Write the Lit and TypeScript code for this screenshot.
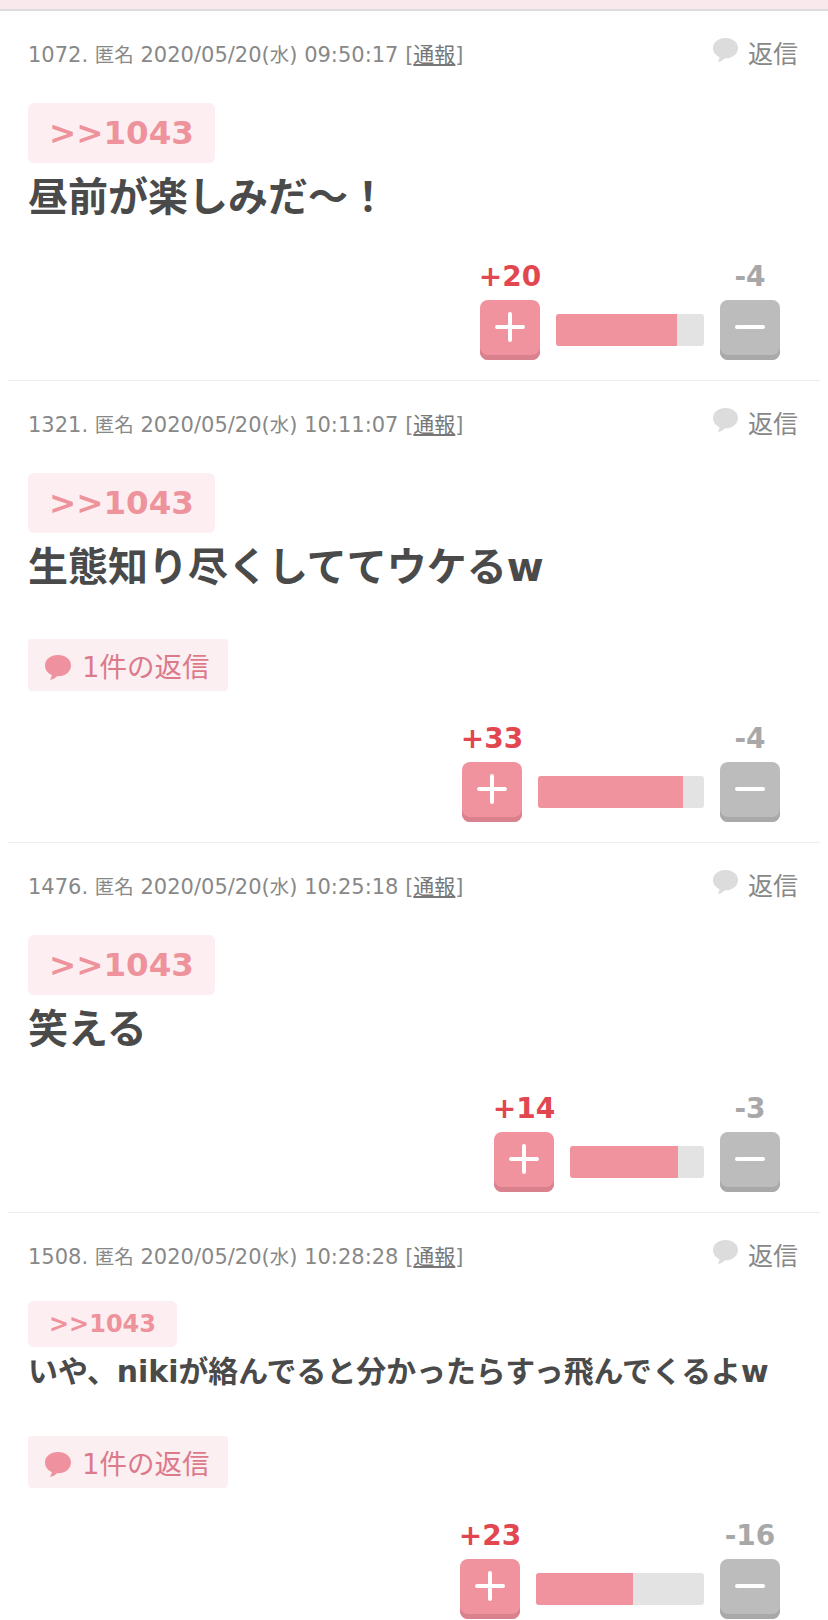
import { LitElement, html, css } from "lit";
import { customElement } from "lit/decorators.js";

const bubble = html`<svg viewBox="0 0 28 26" aria-hidden="true"><path d="M14 0C6.500 0 1 4.500 1 10.500c0 4.300 2.800 7.800 6.800 9.500-.2 1.800-.9 3.600-2 5 2.900-.4 5.200-1.600 7-3.800.4 0 .8.100 1.200.100 7.500 0 13-4.800 13-10.800S21.500 0 14 0z"/></svg>`;

interface Post {
  id: number; time: string; text: string; small?: boolean; replies?: number;
  plus: number; minus: number; bar: number;
}

const posts: Post[] = [
  { id: 1072, time: "09:50:17", text: "昼前が楽しみだ〜！", plus: 20, minus: 4, bar: 148 },
  { id: 1321, time: "10:11:07", text: "生態知り尽くしててウケるw", replies: 1, plus: 33, minus: 4, bar: 166 },
  { id: 1476, time: "10:25:18", text: "笑える", plus: 14, minus: 3, bar: 134 },
  { id: 1508, time: "10:28:28", text: "いや、nikiが絡んでると分かったらすっ飛んでくるよw", small: true, replies: 1, plus: 23, minus: 16, bar: 168 },
];

@customElement("app-root")
export class AppRoot extends LitElement {
  static styles = css`
    :host {
      display: block;
      width: 828px;
      height: 1620px;
      overflow: hidden;
      background: #fff;
      font-family: "DejaVu Sans", "Noto Sans CJK JP", sans-serif;
    }
    .band { height: 9px; background: #f9e8ec; border-bottom: 2px solid #dedcdc; }
    .post { margin: 0 8px; padding: 0 20px; border-bottom: 1px solid #eeeeee; }
    .meta {
      display: flex; justify-content: space-between; align-items: center;
      height: 44px; padding-top: 20px;
      font-size: 21px; color: #888;
    }
    .meta .jp { font-size: 19.500px; }
    .meta u { color: #777; }
    .reply { display: flex; align-items: center; gap: 9px; font-size: 25px; color: #888; margin-right: 2px; margin-top: -2px; }
    .reply svg { width: 27px; height: 25px; fill: #dcdcdc; margin-top: -3px; }
    .tag {
      width: fit-content; margin-top: 28px; padding: 0 21px;
      height: 60px; line-height: 60px;
      font-size: 32.500px; font-weight: 700; color: #ee929c; background: #fdeef1; border-radius: 6px;
    }
    .small .tag { height: 46px; line-height: 46px; font-size: 24px; padding: 0 21px; margin-top: 24px; }
    .text { margin-top: 4px; font-size: 40px; line-height: 60px; font-weight: 700; color: #4a4a4a; }
    .small .text { font-size: 29.900px; line-height: 50px; margin-top: 0; }
    .replies {
      display: flex; width: fit-content; align-items: center; gap: 10px;
      margin-top: 42px; height: 52px; padding: 0 18px 0 16px;
      background: #fbeff2; border-radius: 4px; font-size: 27.500px; color: #dc7a8c;
    }
    .small .replies { margin-top: 39px; }
    .replies svg { width: 28px; height: 26px; fill: #f0919f; margin-top: 5px; }
    .votes {
      display: flex; justify-content: flex-end; align-items: flex-end; gap: 16px;
      padding: 0 20px 20px 0; margin-top: 32px;
    }
    .replies + .votes { margin-top: 30px; }
    .col { display: flex; flex-direction: column; align-items: center; width: 60px; }
    .count { font-size: 28px; font-weight: 700; line-height: 36px; white-space: nowrap; margin-bottom: 5px; }
    .col.p .count { color: #e2474f; }
    .col.m .count { color: #a8a8a8; }
    .btn {
      box-sizing: border-box; width: 60px; height: 60px; border-radius: 8px;
      display: flex; align-items: center; justify-content: center; padding-bottom: 7px;
    }
    .btn svg { width: 30px; height: 30px; stroke: #fff; stroke-width: 4; stroke-linecap: round; fill: none; }
    .col.p .btn { background: #f0939f; box-shadow: inset 0 -5px 0 #d9818d; }
    .col.m .btn { background: #bcbcbc; box-shadow: inset 0 -5px 0 #a9a9a9; }
    .bar { height: 32px; margin-bottom: 14px; background: #e3e3e3; border-radius: 3px; overflow: hidden; }
    .fill { height: 100%; background: #f0939f; }
  `;

  render() {
    return html`
      <div class="band"></div>
      ${posts.map((p) => html`
        <div class="post ${p.small ? "small" : ""}">
          <div class="meta">
            <span>${p.id}. <span class="jp">匿名</span> 2020/05/20(<span class="jp">水</span>) ${p.time} [<u>通報</u>]</span>
            <span class="reply">${bubble}返信</span>
          </div>
          <div class="tag">&gt;&gt;1043</div>
          <div class="text">${p.text}</div>
          ${p.replies ? html`<div class="replies">${bubble}${p.replies}件の返信</div>` : ""}
          <div class="votes">
            <div class="col p">
              <div class="count">+${p.plus}</div>
              <div class="btn"><svg viewBox="0 0 30 30"><path d="M15 2v26M2 15h26"/></svg></div>
            </div>
            <div class="bar" style="width:${p.bar}px">
              <div class="fill" style="width:${(p.plus / (p.plus + p.minus)) * 98.2}%"></div>
            </div>
            <div class="col m">
              <div class="count">-${p.minus}</div>
              <div class="btn"><svg viewBox="0 0 30 30"><path d="M2 15h26"/></svg></div>
            </div>
          </div>
        </div>
      `)}
    `;
  }
}
